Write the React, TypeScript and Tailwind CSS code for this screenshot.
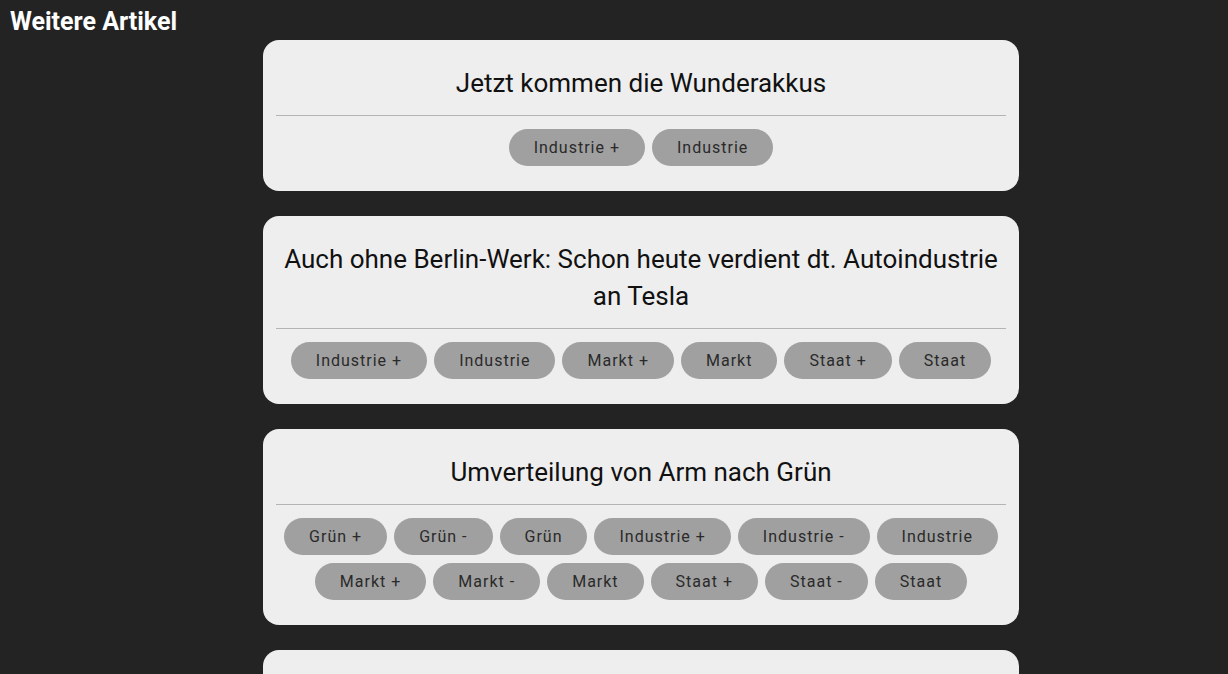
const articles = [
  { title: "Jetzt kommen die Wunderakkus", tags: ["Industrie +", "Industrie"] },
  {
    title: "Auch ohne Berlin-Werk: Schon heute verdient dt. Autoindustrie an Tesla",
    tags: ["Industrie +", "Industrie", "Markt +", "Markt", "Staat +", "Staat"],
  },
  {
    title: "Umverteilung von Arm nach Grün",
    tags: [
      "Grün +",
      "Grün -",
      "Grün",
      "Industrie +",
      "Industrie -",
      "Industrie",
      "Markt +",
      "Markt -",
      "Markt",
      "Staat +",
      "Staat -",
      "Staat",
    ],
  },
  { title: "Weitere Nachrichten aus der Wirtschaft", tags: ["Markt"] },
];

function ArticleCard({ title, tags }: { title: string; tags: string[] }) {
  return (
    <div className="rounded-[16px] bg-[#eeeeee] p-[13px]">
      <h2 className="px-2 py-[12px] text-center text-[26px] leading-[37px] text-[#111]">{title}</h2>
      <div className="mt-[1px] h-px bg-[#b4b4b4]" />
      <div className="mt-[13px] mb-[12px] flex flex-wrap justify-center gap-x-[7px] gap-y-[8px]">
        {tags.map((t) => (
          <span
            key={t}
            className="flex h-[37px] items-center rounded-full bg-[#a0a0a0] px-[25px] text-[16px] tracking-[1px] text-[#2a2a2a]"
          >
            {t}
          </span>
        ))}
      </div>
    </div>
  );
}

export default function App() {
  return (
    <div className="h-[674px] overflow-hidden bg-[#232323]" style={{ fontFamily: "Roboto, 'Noto Sans', sans-serif" }}>
      <div className="h-[40px] px-[10px] pt-[6px] text-[25px] font-bold leading-[32px] text-white">
        Weitere Artikel
      </div>
      <div className="flex flex-col gap-[25px] pl-[263px]">
        {articles.map((a) => (
          <div key={a.title} className="w-[756px]">
            <ArticleCard title={a.title} tags={a.tags} />
          </div>
        ))}
      </div>
    </div>
  );
}
